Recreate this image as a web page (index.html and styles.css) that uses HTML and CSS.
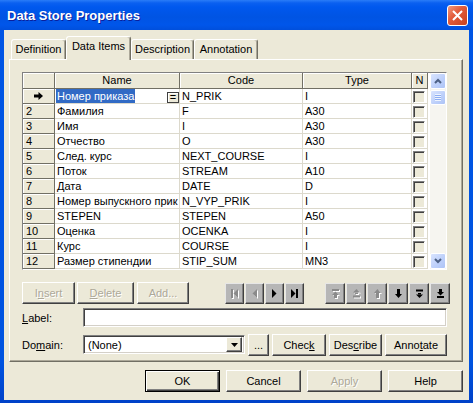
FILE: index.html
```html
<!DOCTYPE html>
<html lang="ru">
<head>
  <meta charset="UTF-8">
  <title>Data Store Properties</title>
  <link rel="stylesheet" href="styles.css">
</head>
<body>
  <div class="window">
    <div class="titlebar">
      <span class="title">Data Store Properties</span>
      <span class="close">
        <svg width="11" height="11" viewBox="0 0 11 11"><path d="M1 1L10 10M10 1L1 10" stroke="#fff" stroke-width="2"/></svg>
      </span>
    </div>

    <div class="client">
      <div class="tabs">
        <div class="tab" style="width:55px">Definition</div>
        <div class="tab active" style="width:65px">Data Items</div>
        <div class="tab" style="width:63px">Description</div>
        <div class="tab" style="width:64px">Annotation</div>
      </div>

      <div class="panel">
        <div class="grid">
          <div class="table">
            <div class="row head">
              <div class="cell ind"></div>
              <div class="cell">Name</div>
              <div class="cell">Code</div>
              <div class="cell">Type</div>
              <div class="cell">N</div>
            </div>
            <div class="row">
              <div class="cell ind center"><svg width="9" height="8" viewBox="0 0 9 8"><polygon points="0,2.5 4.5,2.5 4.5,0 9,4 4.5,8 4.5,5.5 0,5.5"/></svg></div>
              <div class="cell name"><span class="hl">Номер приказа</span><span class="eq">=</span></div>
              <div class="cell">N_PRIK</div>
              <div class="cell">I</div>
              <div class="cell chk"><span class="box"></span></div>
            </div>
            <div class="row">
              <div class="cell ind">2</div><div class="cell">Фамилия</div><div class="cell">F</div><div class="cell">A30</div><div class="cell chk"><span class="box"></span></div>
            </div>
            <div class="row">
              <div class="cell ind">3</div><div class="cell">Имя</div><div class="cell">I</div><div class="cell">A30</div><div class="cell chk"><span class="box"></span></div>
            </div>
            <div class="row">
              <div class="cell ind">4</div><div class="cell">Отчество</div><div class="cell">O</div><div class="cell">A30</div><div class="cell chk"><span class="box"></span></div>
            </div>
            <div class="row">
              <div class="cell ind">5</div><div class="cell">След. курс</div><div class="cell">NEXT_COURSE</div><div class="cell">I</div><div class="cell chk"><span class="box"></span></div>
            </div>
            <div class="row">
              <div class="cell ind">6</div><div class="cell">Поток</div><div class="cell">STREAM</div><div class="cell">A10</div><div class="cell chk"><span class="box"></span></div>
            </div>
            <div class="row">
              <div class="cell ind">7</div><div class="cell">Дата</div><div class="cell">DATE</div><div class="cell">D</div><div class="cell chk"><span class="box"></span></div>
            </div>
            <div class="row">
              <div class="cell ind">8</div><div class="cell">Номер выпускного прик</div><div class="cell">N_VYP_PRIK</div><div class="cell">I</div><div class="cell chk"><span class="box"></span></div>
            </div>
            <div class="row">
              <div class="cell ind">9</div><div class="cell">STEPEN</div><div class="cell">STEPEN</div><div class="cell">A50</div><div class="cell chk"><span class="box"></span></div>
            </div>
            <div class="row">
              <div class="cell ind">10</div><div class="cell">Оценка</div><div class="cell">OCENKA</div><div class="cell">I</div><div class="cell chk"><span class="box"></span></div>
            </div>
            <div class="row">
              <div class="cell ind">11</div><div class="cell">Курс</div><div class="cell">COURSE</div><div class="cell">I</div><div class="cell chk"><span class="box"></span></div>
            </div>
            <div class="row">
              <div class="cell ind">12</div><div class="cell">Размер стипендии</div><div class="cell">STIP_SUM</div><div class="cell">MN3</div><div class="cell chk"><span class="box"></span></div>
            </div>
          </div>

          <div class="vscroll">
            <div class="sb-btn"><svg width="8" height="6" viewBox="0 0 8 6"><polyline points="1,5 4,2 7,5" fill="none" stroke="#4d6185" stroke-width="2"/></svg></div>
            <div class="sb-thumb"><span class="grip"></span></div>
            <div class="sb-track"></div>
            <div class="sb-btn"><svg width="8" height="6" viewBox="0 0 8 6"><polyline points="1,1 4,4 7,1" fill="none" stroke="#4d6185" stroke-width="2"/></svg></div>
          </div>
        </div>

        <div class="toolbar">
          <button class="btn off" style="width:53px">I<u>n</u>sert</button>
          <button class="btn off" style="width:57px; margin-left:2px"><u>D</u>elete</button>
          <button class="btn off" style="width:52px; margin-left:3px">Add...</button>

          <div class="nav first-group">
            <span class="nbtn off"><svg width="7" height="9" viewBox="0 0 7 9"><rect x="0" y="0" width="2" height="9"/><polygon points="7,0 7,9 2.5,4.5"/></svg></span>
            <span class="nbtn off"><svg width="5" height="9" viewBox="0 0 5 9"><polygon points="5,0 5,9 0.5,4.5"/></svg></span>
            <span class="nbtn"><svg width="5" height="9" viewBox="0 0 5 9"><polygon points="0,0 0,9 4.5,4.5"/></svg></span>
            <span class="nbtn"><svg width="7" height="9" viewBox="0 0 7 9"><polygon points="0,0 0,9 4.5,4.5"/><rect x="5" y="0" width="2" height="9"/></svg></span>
          </div>

          <div class="nav move-group">
            <span class="nbtn off"><svg width="7" height="9" viewBox="0 0 7 9"><rect x="0" y="0" width="7" height="2"/><polygon points="3.5,2.5 7,6 0,6"/><rect x="2" y="6" width="3" height="3"/></svg></span>
            <span class="nbtn off"><svg width="7" height="9" viewBox="0 0 7 9"><polygon points="3.5,0 7,3.5 0,3.5"/><rect x="2" y="3.5" width="3" height="1.5"/><rect x="0" y="6.5" width="7" height="2"/></svg></span>
            <span class="nbtn off"><svg width="7" height="9" viewBox="0 0 7 9"><polygon points="3.5,0 7,4 5,4 5,9 2,9 2,4 0,4"/></svg></span>
            <span class="nbtn"><svg width="7" height="9" viewBox="0 0 7 9"><polygon points="2,0 5,0 5,5 7,5 3.5,9 0,5 2,5"/></svg></span>
            <span class="nbtn"><svg width="7" height="9" viewBox="0 0 7 9"><rect x="0" y="0.5" width="7" height="2"/><rect x="2" y="4" width="3" height="1.5"/><polygon points="0,5.5 7,5.5 3.5,9"/></svg></span>
            <span class="nbtn"><svg width="7" height="9" viewBox="0 0 7 9"><rect x="2" y="0" width="3" height="3"/><polygon points="0,3 7,3 3.5,6.5"/><rect x="0" y="7" width="7" height="2"/></svg></span>
          </div>
        </div>

        <div class="field-row">
          <span class="lbl"><u>L</u>abel:</span>
          <span class="edit" style="width:364px"></span>
        </div>

        <div class="field-row domain">
          <span class="lbl">Do<u>m</u>ain:</span>
          <span class="edit combo" style="width:162px">
            <span class="combo-text">(None)</span>
            <span class="drop"><svg width="7" height="4" viewBox="0 0 7 4"><polygon points="0,0 7,0 3.5,4"/></svg></span>
          </span>
          <button class="btn" style="width:21px; margin-left:3px">...</button>
          <button class="btn" style="width:54px; margin-left:3px">Chec<u>k</u></button>
          <button class="btn" style="width:53px; margin-left:3px">Des<u>c</u>ribe</button>
          <button class="btn" style="width:62px; margin-left:3px">Anno<u>t</u>ate</button>
        </div>
      </div>

      <div class="actions">
        <button class="btn default">OK</button>
        <button class="btn">Cancel</button>
        <button class="btn off">Apply</button>
        <button class="btn">Help</button>
      </div>
    </div>
  </div>
</body>
</html>
```

FILE: styles.css
```css
html, body {
  margin: 0;
  padding: 0;
}

body {
  font: 11px "Liberation Sans", Arial, sans-serif;
  color: #000;
  background: #fff;
}

.window {
  width: 473px;
  height: 403px;
  box-sizing: border-box;
  padding: 0 4px 3px 4px;
  background: linear-gradient(#0055e5, #0053e0 90%, #0041c8);
  display: flex;
  flex-direction: column;
}

/* title bar */
.titlebar {
  height: 30px;
  margin: 0 -4px;
  padding: 0 5px 0 7px;
  display: flex;
  align-items: center;
  justify-content: space-between;
  background: linear-gradient(#2a7cf8 0px, #0a60f0 3px, #0058ee 7px, #0054e3 17px, #0056ea 25px, #004fdc 30px);
}

.title {
  color: #fff;
  font-weight: bold;
  font-size: 13px;
  text-shadow: 1px 1px #0a1f9c;
  margin-top: 1px;
}

.close {
  width: 21px;
  height: 21px;
  box-sizing: border-box;
  border: 1px solid #fff;
  border-radius: 3px;
  background: linear-gradient(135deg, #f09a7f, #e35d3c 40%, #c7411f);
  display: flex;
  align-items: center;
  justify-content: center;
}

/* dialog body */
.client {
  flex: 1;
  background: #ece9d8;
  padding: 6px 6px 0 5px;
  display: flex;
  flex-direction: column;
}

.tabs {
  display: flex;
  align-items: flex-end;
  height: 24px;
  padding-left: 2px;
  margin-bottom: -1px;
  position: relative;
  z-index: 1;
}

.tab {
  height: 20px;
  box-sizing: border-box;
  margin-bottom: 1px;
  border: 1px solid;
  border-bottom: 0;
  border-color: #fff #716f64 transparent #fff;
  border-radius: 3px 3px 0 0;
  box-shadow: inset -1px 0 #aca899;
  background: #ece9d8;
  text-align: center;
  line-height: 18px;
  white-space: nowrap;
}

.tab.active {
  height: 24px;
  margin-bottom: 0;
  line-height: 17px;
  padding-top: 1px;
}

.panel {
  height: 303px;
  box-sizing: border-box;
  border: 1px solid;
  border-color: #fff #716f64 #716f64 #fff;
  box-shadow: inset -1px -1px #aca899;
  padding: 12px 0 0 12px;
}

/* data grid */
.grid {
  width: 425px;
  height: 198px;
  box-sizing: border-box;
  border: 1px solid;
  border-color: #808080 #fff #fff #808080;
  background: #fff;
  display: flex;
}

.table {
  width: 405px;
}

.row {
  display: grid;
  grid-template-columns: 32px 125px 123px 109px 16px;
  height: 15px;
}

.row.head {
  height: 16px;
}

.cell {
  box-sizing: border-box;
  border-right: 1px solid #dcd9cc;
  border-bottom: 1px solid #dcd9cc;
  padding-left: 2px;
  line-height: 14px;
  white-space: nowrap;
  overflow: hidden;
  background: #fff;
}

.head .cell {
  background: #ece9d8;
  border-color: #716f64;
  box-shadow: inset 1px 1px #fff;
  text-align: center;
  padding: 0;
  line-height: 15px;
}

.cell.ind {
  background: #ece9d8;
  border-color: #716f64;
  box-shadow: inset 1px 1px #fff;
  padding-left: 3px;
}

.cell.center {
  display: flex;
  align-items: center;
  justify-content: center;
  padding: 0;
}

.cell.name {
  position: relative;
}

.hl {
  display: inline-block;
  height: 14px;
  margin-left: -1px;
  padding: 0 1px;
  background: #316ac5;
  color: #fff;
}

.eq {
  position: absolute;
  right: 0;
  top: 3px;
  width: 12px;
  height: 11px;
  box-sizing: border-box;
  border: 1px solid #404040;
  box-shadow: inset 1px 1px #fff;
  background: #ece9d8;
  text-align: center;
  line-height: 9px;
}

.cell.chk {
  padding: 0;
}

.box {
  display: block;
  width: 12px;
  height: 12px;
  box-sizing: border-box;
  margin: 2px 0 0 1px;
  border: 1px solid;
  border-color: #808080 #fff #fff #808080;
  box-shadow: inset 1px 1px #404040;
  background: #ece9d8;
}

/* scroll bar */
.vscroll {
  width: 16px;
  margin-left: 2px;
  display: flex;
  flex-direction: column;
  background: #f6f5f0;
}

.sb-btn, .sb-thumb {
  height: 16px;
  box-sizing: border-box;
  border: 1px solid #fff;
  border-radius: 2px;
  background: linear-gradient(135deg, #d9e4fe, #bccffa 60%, #aec4f6);
  display: flex;
  align-items: center;
  justify-content: center;
}

.sb-thumb {
  height: 15px;
  margin-top: 1px;
}

.grip {
  width: 6px;
  height: 7px;
  background: repeating-linear-gradient(#eef4ff 0 1px, #8eaef2 1px 2px);
}

.sb-track {
  flex: 1;
}

/* buttons */
.btn {
  font: inherit;
  color: #000;
  height: 22px;
  box-sizing: border-box;
  padding: 0;
  border: 1px solid;
  border-color: #fff #404040 #404040 #fff;
  box-shadow: inset -1px -1px #808080;
  background: #ece9d8;
  text-align: center;
}

.btn.off, .btn.off u {
  color: #aca899;
  text-shadow: 1px 1px #fff;
}

.btn.default {
  border: 1px solid #000;
  box-shadow: inset 1px 1px #fff, inset -1px -1px #404040, inset -2px -2px #808080;
}

.toolbar {
  display: flex;
  margin-top: 12px;
  height: 22px;
}

.nav {
  display: flex;
  gap: 1px;
  margin-top: 1px;
}

.first-group {
  margin-left: 36px;
}

.move-group {
  margin-left: 21px;
}

.nbtn {
  width: 19px;
  height: 21px;
  box-sizing: border-box;
  border: 1px solid;
  border-color: #e6e6e6 #404040 #404040 #e6e6e6;
  box-shadow: inset -1px -1px #808080;
  background: #b6b6b6;
  display: flex;
  align-items: center;
  justify-content: center;
}

.move-group .nbtn {
  width: 20px;
}

.nbtn svg {
  fill: #000;
}

.nbtn.off svg {
  fill: #8a8a8a;
  filter: drop-shadow(1px 1px 0 #fff);
}

/* label / domain rows */
.field-row {
  display: flex;
  align-items: center;
  margin-top: 4px;
  height: 19px;
}

.field-row.domain {
  margin-top: 7px;
  height: 21px;
}

.lbl {
  width: 61px;
}

.edit {
  height: 19px;
  box-sizing: border-box;
  border: 1px solid;
  border-color: #808080 #fff #fff #808080;
  box-shadow: inset 1px 1px #404040, inset -1px -1px #d4d0c8;
  background: #fff;
}

.combo {
  display: flex;
  align-items: center;
  justify-content: space-between;
  padding: 2px;
}

.combo-text {
  padding-left: 2px;
}

.drop {
  width: 16px;
  height: 15px;
  box-sizing: border-box;
  border: 1px solid;
  border-color: #fff #404040 #404040 #fff;
  box-shadow: inset -1px -1px #808080;
  background: #ece9d8;
  display: flex;
  align-items: center;
  justify-content: center;
}

/* OK / Cancel row */
.actions {
  display: flex;
  justify-content: flex-end;
  gap: 6px;
  margin-top: 8px;
}

.actions .btn {
  width: 75px;
}
```
